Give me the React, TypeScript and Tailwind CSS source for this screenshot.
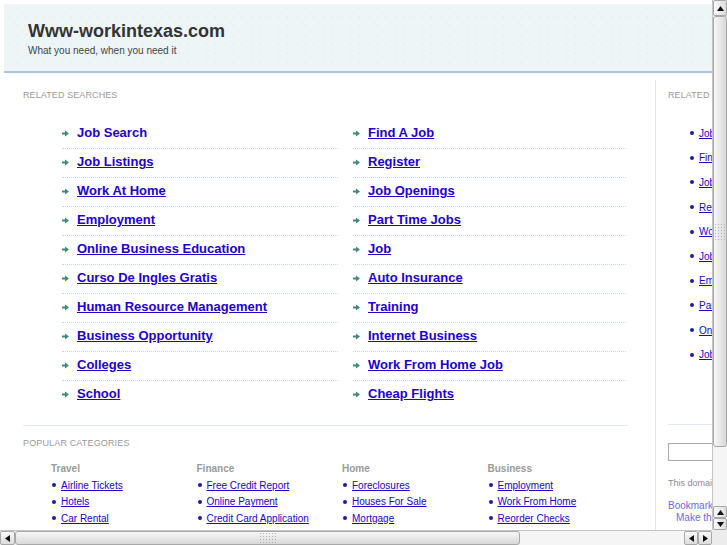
import React from 'react';

const leftSearches = [
  'Job Search',
  'Job Listings',
  'Work At Home',
  'Employment',
  'Online Business Education',
  'Curso De Ingles Gratis',
  'Human Resource Management',
  'Business Opportunity',
  'Colleges',
  'School',
];

const rightSearches = [
  'Find A Job',
  'Register',
  'Job Openings',
  'Part Time Jobs',
  'Job',
  'Auto Insurance',
  'Training',
  'Internet Business',
  'Work From Home Job',
  'Cheap Flights',
];

const sideLinks = [
  'Job Search',
  'Find A Job',
  'Job Listings',
  'Register',
  'Work At Home',
  'Job Openings',
  'Employment',
  'Part Time Jobs',
  'Online Business Education',
  'Job',
];

const categories = [
  { title: 'Travel', links: ['Airline Tickets', 'Hotels', 'Car Rental'] },
  { title: 'Finance', links: ['Free Credit Report', 'Online Payment', 'Credit Card Application'] },
  { title: 'Home', links: ['Foreclosures', 'Houses For Sale', 'Mortgage'] },
  { title: 'Business', links: ['Employment', 'Work From Home', 'Reorder Checks'] },
];

const Arrow = () => (
  <svg width="7" height="7" viewBox="0 0 7 7" className="shrink-0 mr-[8px]">
    <rect x="0" y="2.5" width="3.5" height="2" fill="#3d8a7f" />
    <polygon points="3,0.5 7,3.5 3,6.5" fill="#3d8a7f" />
  </svg>
);

const Dot = () => <span className="w-[4px] h-[4px] rounded-full bg-[#1c1c9c] shrink-0 mr-[5px]" />;

const SearchColumn = ({ items, first }: { items: string[]; first?: boolean }) => (
  <ul className={`w-[288px] ${first ? 'pl-[12px]' : 'pl-[15px]'}`}>
    {items.map((t, i) => (
      <li
        key={t}
        className={`flex items-center pt-[5px] pb-[7px] leading-[16px] ${i < items.length - 1 ? 'border-b border-dotted border-[#c6d8ec]' : ''}`}
      >
        <Arrow />
        <a className={`text-[13px] font-bold text-[#2200cc] ${first && i === 0 ? '' : 'underline'}`}>{t}</a>
      </li>
    ))}
  </ul>
);

const TriUp = () => (
  <svg width="7" height="5" viewBox="0 0 7 5"><polygon points="0,5 3.5,0 7,5" fill="#111" /></svg>
);
const TriDown = () => (
  <svg width="7" height="5" viewBox="0 0 7 5"><polygon points="0,0 3.5,5 7,0" fill="#111" /></svg>
);
const TriLeft = () => (
  <svg width="5" height="7" viewBox="0 0 5 7"><polygon points="5,0 0,3.5 5,7" fill="#111" /></svg>
);
const TriRight = () => (
  <svg width="5" height="7" viewBox="0 0 5 7"><polygon points="0,0 5,3.5 0,7" fill="#111" /></svg>
);

const Grip = ({ vertical }: { vertical?: boolean }) => (
  <div className={`grid gap-[2px] ${vertical ? 'grid-cols-4' : 'grid-cols-6'}`}>
    {Array.from({ length: 24 }).map((_, i) => (
      <span key={i} className="w-[1px] h-[1px] bg-[#b0b0b0]" />
    ))}
  </div>
);

const VScroll = () => (
  <div className="w-[15px] h-[530px] flex flex-col bg-[#f1f1f1] border-l border-[#c4c4c4]">
    <div className="h-[16px] flex items-center justify-center bg-gradient-to-r from-[#fafafa] to-[#dcdcdc] border border-[#a8a8a8] rounded-[2px]">
      <TriUp />
    </div>
    <div className="h-[431px] flex items-center justify-center bg-gradient-to-r from-[#f7f7f7] to-[#d9d9d9] border border-[#a8a8a8] rounded-[3px]">
      <Grip vertical />
    </div>
    <div className="flex-1 bg-[#f5f5f5]" />
    <div className="h-[12px] flex items-center justify-center bg-gradient-to-r from-[#fafafa] to-[#dcdcdc] border border-[#a8a8a8] rounded-[2px]">
      <TriUp />
    </div>
    <div className="h-[12px] flex items-center justify-center bg-gradient-to-r from-[#fafafa] to-[#dcdcdc] border border-[#a8a8a8] rounded-[2px]">
      <TriDown />
    </div>
  </div>
);

const HScroll = () => (
  <div className="w-[712px] h-[15px] flex bg-[#f1f1f1] border-t border-[#c4c4c4]">
    <div className="w-[15px] flex items-center justify-center bg-gradient-to-b from-[#fafafa] to-[#dcdcdc] border border-[#a8a8a8] rounded-[2px]">
      <TriLeft />
    </div>
    <div className="w-[505px] flex items-center justify-center bg-gradient-to-b from-[#f7f7f7] to-[#d9d9d9] border border-[#a8a8a8] rounded-[3px]">
      <Grip />
    </div>
    <div className="flex-1 bg-[#f5f5f5]" />
    <div className="w-[14px] flex items-center justify-center bg-gradient-to-b from-[#fafafa] to-[#dcdcdc] border border-[#a8a8a8] rounded-[2px]">
      <TriLeft />
    </div>
    <div className="w-[14px] flex items-center justify-center bg-gradient-to-b from-[#fafafa] to-[#dcdcdc] border border-[#a8a8a8] rounded-[2px]">
      <TriRight />
    </div>
  </div>
);

const Page = () => (
  <div className="w-[800px] pt-1 pl-1">
    {/* header */}
    <div className="h-[69px] bg-[#eef5f7] bg-[radial-gradient(circle,#e6eef1_1px,transparent_1px)] bg-[length:9px_9px] border-b-2 border-[#abc3e7] pl-6 pt-[16px]">
      <h1 className="text-[18px] font-bold text-[#333] leading-[22px]">Www-workintexas.com</h1>
      <p className="text-[10px] text-[#444] leading-[12px] mt-[3px]">What you need, when you need it</p>
    </div>

    <div className="flex mt-[7px]">
      {/* main column */}
      <div className="w-[651px] pl-[19px] pt-[9px]">
        <h2 className="text-[9px] tracking-[0.1px] text-[#999] leading-[12px]">RELATED SEARCHES</h2>
        <div className="flex ml-[27px] mt-[19px]">
          <SearchColumn items={leftSearches} first />
          <SearchColumn items={rightSearches} />
        </div>

        <div className="w-[605px] border-t border-[#dfe8f3] mt-[16px]" />
        <h2 className="text-[9px] tracking-[0.15px] text-[#999] leading-[12px] mt-[11px]">POPULAR CATEGORIES</h2>
        <div className="grid grid-cols-4 w-[582px] ml-[28px] mt-[13px]">
          {categories.map((c) => (
            <div key={c.title}>
              <h3 className="text-[10px] font-bold text-[#999] leading-[14px]">{c.title}</h3>
              <ul className="mt-[1px]">
                {c.links.map((l) => (
                  <li key={l} className="flex items-center h-[16.5px] pl-[1px]">
                    <Dot />
                    <a className="text-[10px] text-[#2200cc] underline">{l}</a>
                  </li>
                ))}
              </ul>
            </div>
          ))}
        </div>
      </div>

      {/* sidebar */}
      <div className="w-[140px] h-[460px] border-l border-[#dde6f2] pl-3 pt-[9px]">
        <h2 className="text-[9px] tracking-[0.1px] text-[#999] leading-[12px]">RELATED</h2>
        <ul className="mt-[20px] pl-[22px]">
          {sideLinks.map((l) => (
            <li key={l} className="flex items-center h-[24.6px] whitespace-nowrap">
              <Dot />
              <a className="text-[10px] text-[#2200cc] underline">{l}</a>
            </li>
          ))}
        </ul>
        <div className="border-t border-[#dfe8f3] mt-[57px]" />
        <input className="mt-[18px] w-[100px] h-[18px] border border-[#a9a9a9] bg-white" />
        <p className="mt-[13px] text-[9px] leading-[12px] text-[#8a8a8a] whitespace-nowrap">This domain may be for sale!</p>
        <p className="mt-[11px] text-[10px] leading-[12px] text-[#6a6ad8] whitespace-nowrap">Bookmark this page</p>
        <p className="pl-2 text-[10px] leading-[12px] text-[#6a6ad8] whitespace-nowrap">Make this your homepage</p>
      </div>
    </div>
  </div>
);

export default function App() {
  return (
    <div className="w-[727px] h-[545px] overflow-hidden flex flex-col bg-white font-['Liberation_Sans',Arial,sans-serif]">
      <div className="flex h-[530px]">
        <div className="w-[712px] h-[530px] overflow-hidden">
          <Page />
        </div>
        <VScroll />
      </div>
      <div className="flex h-[15px]">
        <HScroll />
        <div className="w-[15px] bg-[#ececec]" />
      </div>
    </div>
  );
}
